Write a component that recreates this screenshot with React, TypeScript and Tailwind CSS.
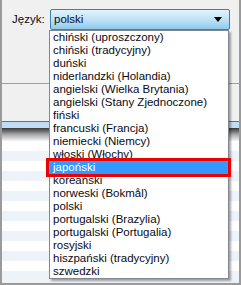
import React from 'react';

const languages = [
  'chiński (uproszczony)',
  'chiński (tradycyjny)',
  'duński',
  'niderlandzki (Holandia)',
  'angielski (Wielka Brytania)',
  'angielski (Stany Zjednoczone)',
  'fiński',
  'francuski (Francja)',
  'niemiecki (Niemcy)',
  'włoski (Włochy)',
  'japoński',
  'koreański',
  'norweski (Bokmål)',
  'polski',
  'portugalski (Brazylia)',
  'portugalski (Portugalia)',
  'rosyjski',
  'hiszpański (tradycyjny)',
  'szwedzki',
];

const selected = 'japoński';

export default function App() {
  return (
    <div
      className="relative w-[241px] h-[285px] overflow-hidden bg-[#f0f0f0] border-l-2 border-r-2 border-b-2 border-[#9a9a9a] text-[11.5px] text-[#0a0a14]"
      style={{ fontFamily: '"Liberation Sans", Arial, sans-serif' }}
    >
      {/* top panel */}
      <div className="h-[83px] flex items-start pt-[9px] pl-[10px]">
        <span className="h-[21px] leading-[21px] w-[38px]">Język:</span>
        <div className="w-[180px] h-[21px] flex items-center justify-between pl-[3px] pr-[7px] rounded-[2px] border border-[#3c7fb1] bg-gradient-to-b from-[#e3f3fc] via-[#bfe2f5] to-[#8ecbed]">
          <span>polski</span>
          <svg width="8" height="5" viewBox="0 0 8 5">
            <path d="M0 0h8L4 5z" fill="#000" />
          </svg>
        </div>
      </div>
      <div className="h-px bg-[#a0a0a0]" />
      <div className="h-[37px]" />

      {/* table header */}
      <div className="h-px bg-[#5a7390]" />
      <div className="h-[6px] bg-[#c2dcf6]" />
      <div className="h-[13px] bg-gradient-to-b from-[#3a3a3a] via-[#a8a8a8] to-[#f4f6f9]" />

      {/* table rows */}
      <div className="flex flex-col">
        {Array.from({ length: 14 }).map((_, i) => (
          <div key={i} className={i % 2 === 0 ? 'h-[10px] bg-white' : 'h-[10px] bg-[#eef2f9]'} />
        ))}
      </div>

      {/* open dropdown list */}
      <div className="absolute left-[47px] top-[30px] w-[180px] h-[249px] bg-white border border-[#828790] shadow-[2px_2px_2px_rgba(0,0,0,0.35)]">
        {languages.map((lang) => (
          <div
            key={lang}
            className={
              lang === selected
                ? 'relative h-[13px] leading-[13px] pl-[3px] bg-[#3399ff] text-white whitespace-nowrap'
                : 'h-[13px] leading-[13px] pl-[3px] whitespace-nowrap'
            }
          >
            {lang}
            {lang === selected && (
              <div className="absolute -left-[4px] -right-[3px] -top-[3px] -bottom-[3px] border-[3px] border-[#ee0000]" />
            )}
          </div>
        ))}
      </div>
    </div>
  );
}
